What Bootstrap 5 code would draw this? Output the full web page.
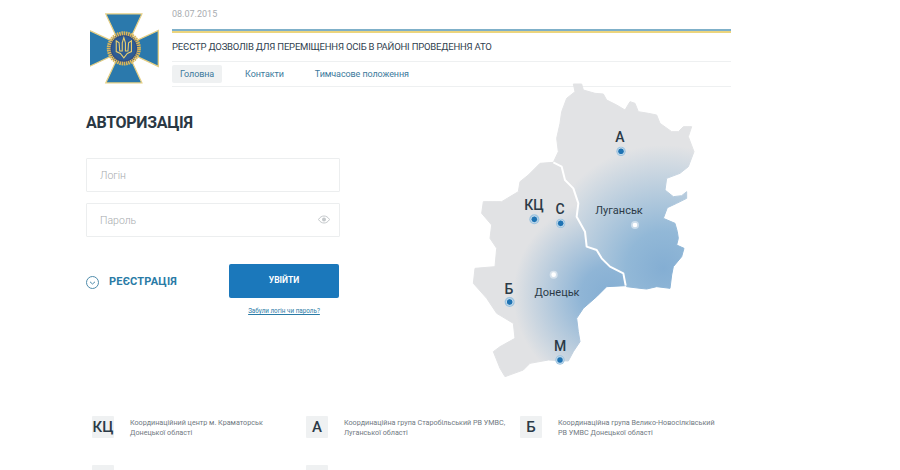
<!DOCTYPE html>
<html lang="uk">
<head>
  <meta charset="UTF-8">
  <meta name="viewport" content="width=device-width, initial-scale=1.0">
  <title>Реєстр дозволів</title>
  <link rel="stylesheet" href="https://cdn.jsdelivr.net/npm/bootstrap@5.3.0/dist/css/bootstrap.min.css">
  <style>
    html, body { height: 470px; overflow: hidden; }
    body { font-family: Roboto, "Liberation Sans", sans-serif; background: #fff; color: #2b3a47; }
    .page-wrap { width: 645px; margin-left: 86px; }
    .logo-box { width: 86px; flex: none; padding: 13px 0 0 4px; }
    .head-col { flex: 1; }
    .head-date { font-size: 9px; line-height: 12px; padding-top: 8px; height: 29px; color: #a9adb1; }
    .head-stripe { height: 4px; background: linear-gradient(#7fb0c9 0, #7fb0c9 50%, #ecd57e 50%, #ecd57e 100%); }
    .head-title { font-size: 9.500px; line-height: 28px; height: 29px; color: #30414f; border-bottom: 1px solid #eef0f1; letter-spacing: -.2px; white-space: nowrap; }
    .head-nav { height: 25px; padding-top: 3px; border-bottom: 1px solid #eef0f1; }
    .head-nav a { font-size: 9px; line-height: 18px; height: 18px; padding: 0 8px; color: #3d7a9c; text-decoration: none; letter-spacing: -.1px; border-radius: 2px; margin-right: 15px; }
    .head-nav a.active { background: #eff1f2; }
    .left-col { width: 254px; flex: none; }
    .auth-title { font-size: 16px; font-weight: 700; line-height: 20px; margin: 26px 0 25px; letter-spacing: -.3px; color: #2a3844; }
    .auth-input { height: 34px; border: 1px solid #eceeef; border-radius: 1px; padding: 0 13px; font-size: 10.500px; font-weight: 300; color: #555; margin-bottom: 11px; box-shadow: none; }
    .auth-input::placeholder { color: #a6aaad; }
    .pass-wrap { position: relative; }
    .pass-eye { position: absolute; right: 10px; top: 12px; }
    .reg-link { height: 34px; padding-top: 2px; font-size: 11px; font-weight: 700; color: #2a7ba6; text-decoration: none; letter-spacing: .2px; gap: 10px; }
    .btn-enter { width: 110px; height: 34px; background: #1b78bb; border: 0; border-radius: 2px; color: #fff; font-size: 8.500px; font-weight: 700; padding: 0 0 2px; }
    .btn-enter:hover { background: #1b78bb; color: #fff; }
    .forgot-link { display: block; width: 110px; margin-top: 8px; text-align: center; font-size: 6.300px; line-height: 10px; color: #2a7ba6; white-space: nowrap; }
    .login-row { margin-top: 27px; }
    .submit-col { margin-right: 1px; }
    .map-box { margin: -12px 0 0 120px; position: relative; width: 250px; height: 310px; flex: none; }
    .map-code { font-size: 14px; font-weight: 500; fill: #2b3a47; text-anchor: middle; }
    .map-city { font-size: 11px; fill: #2b3a47; text-anchor: middle; }
    .legend-grid { display: grid; grid-template-columns: repeat(3, 214px); row-gap: 27px; margin: 31px 0 0 6px; }
    .legend-code { width: 22px; height: 22px; flex: none; background: #eff1f2; font-size: 15px; font-weight: 500; line-height: 22px; text-align: center; color: #2b3a47; border-radius: 1px; }
    .legend-text { font-size: 7.200px; line-height: 10px; margin: 2px 0 0 16px; color: #70797f; white-space: nowrap; }
  </style>
</head>
<body>
<div class="page-wrap">

  <header class="d-flex">
    <div class="logo-box">
      <svg width="74" height="74" viewBox="0 0 234 234">
        <defs>
          <g id="armShape">
            <path d="M50 3 H164 L130 76 H84 Z" fill="#2b79ac" stroke="#e6cf84" stroke-width="4"/>
          </g>
        </defs>
        <use href="#armShape"/>
        <use href="#armShape" transform="rotate(90 107 112)"/>
        <use href="#armShape" transform="rotate(180 107 112)"/>
        <use href="#armShape" transform="rotate(270 107 112)"/>
        <circle cx="107" cy="112" r="48" fill="#2f4f86" stroke="#d9b65a" stroke-width="12" stroke-dasharray="5 2"/>
        <circle cx="107" cy="112" r="38" fill="#2e5c93"/>
        <path d="M107 78 L112 94 V120 L120 120 L122 94 L131 88 V122 L118 128 L107 142 L96 128 L83 122 V88 L92 94 L94 120 L102 120 V94 Z" fill="none" stroke="#e9cf6f" stroke-width="3.500"/>
      </svg>
    </div>
    <div class="head-col">
      <div class="head-date">08.07.2015</div>
      <div class="head-stripe"></div>
      <div class="head-title">РЕЄСТР ДОЗВОЛІВ ДЛЯ ПЕРЕМІЩЕННЯ ОСІБ В РАЙОНІ ПРОВЕДЕННЯ АТО</div>
      <nav class="head-nav d-flex">
        <a class="active" href="#">Головна</a>
        <a href="#">Контакти</a>
        <a href="#">Тимчасове положення</a>
      </nav>
    </div>
  </header>

  <div class="d-flex">
    <div class="left-col">
      <h1 class="auth-title">АВТОРИЗАЦІЯ</h1>
      <form>
        <input class="form-control auth-input" type="text" placeholder="Логін">
        <div class="pass-wrap">
          <input class="form-control auth-input" type="password" placeholder="Пароль">
          <svg class="pass-eye" width="12" height="9" viewBox="0 0 12 9">
            <path d="M.5 4.500C2 2 4 1 6 1s4 1 5.500 3.500C10 7 8 8 6 8S2 7 .5 4.500Z" fill="none" stroke="#c4c8cb"/>
            <circle cx="6" cy="4.500" r="2" fill="#c4c8cb"/>
          </svg>
        </div>
        <div class="d-flex justify-content-between align-items-start login-row">
          <a class="reg-link d-flex align-items-center" href="#">
            <svg width="13" height="13" viewBox="0 0 13 13">
              <circle cx="6.500" cy="6.500" r="6" fill="none" stroke="#4f8cab"/>
              <path d="M4 5.800 6.500 8 9 5.800" fill="none" stroke="#4f8cab"/>
            </svg>
            РЕЄСТРАЦІЯ
          </a>
          <div class="submit-col">
            <button class="btn btn-enter" type="button">УВІЙТИ</button>
            <a class="forgot-link" href="#">Забули логін чи пароль?</a>
          </div>
        </div>
      </form>
    </div>

    <div class="map-box">
      <svg width="250" height="310" viewBox="0 0 750 930">
        <defs>
          <radialGradient id="lugGrad" gradientUnits="userSpaceOnUse" cx="610" cy="580" r="370">
            <stop offset="0" stop-color="#84aed3"/>
            <stop offset=".3" stop-color="#92b8d7"/>
            <stop offset="1" stop-color="#e2e3e5"/>
          </radialGradient>
          <radialGradient id="donGrad" gradientUnits="userSpaceOnUse" cx="450" cy="660" r="290">
            <stop offset="0" stop-color="#84aed3"/>
            <stop offset=".3" stop-color="#8fb5d6"/>
            <stop offset="1" stop-color="#e1e2e4"/>
          </radialGradient>
        </defs>
        <path fill="url(#lugGrad)" stroke="url(#lugGrad)" stroke-width="3" stroke-linejoin="round" d="M340 27 365 27 370 45 405 55 430 57 440 75 470 90 495 105 510 80 525 85 535 110 565 115 590 120 600 145 635 170 655 170 670 155 695 155 685 185 702 230 685 275 660 295 620 310 615 345 640 365 665 362 680 350 680 370 650 385 622 398 610 430 645 445 652 470 655 490 650 510 672 520 665 545 640 575 635 600 630 640 590 635 560 642 540 640 500 635 490 595 450 575 425 550 410 525 380 515 375 470 350 425 355 385 340 340 315 315 305 275 280 262 295 230 290 190 300 145 305 110 320 70 345 50Z"/>
        <path fill="url(#donGrad)" stroke="url(#donGrad)" stroke-width="3" stroke-linejoin="round" d="M497 632 440 635 410 665 370 700 350 730 355 770 360 800 340 830 325 858 265 855 210 865 190 885 135 905 120 880 100 830 120 815 165 790 160 745 110 715 80 670 40 625 45 580 105 575 110 520 90 490 95 450 65 415 70 380 125 380 175 350 180 320 205 300 240 265 280 262 305 275 315 315 340 340 355 385 350 425 375 470 380 515 410 525 425 550 450 575 490 595Z"/>
        <path fill="none" stroke="#fff" stroke-width="6" stroke-linejoin="round" d="M280 262 305 275 315 315 340 340 355 385 350 425 375 470 380 515 410 525 425 550 450 575 490 595 497 632"/>
        <g fill="#1f73b3" stroke="#fff" stroke-width="2">
          <circle cx="483" cy="229" r="14" fill="#9cc3df" stroke="none"/>
          <circle cx="483" cy="229" r="10"/>
          <circle cx="223" cy="433" r="15" fill="#9cc3df" stroke="none"/>
          <circle cx="223" cy="433" r="10"/>
          <circle cx="302" cy="445" r="14" fill="#9cc3df" stroke="none"/>
          <circle cx="302" cy="445" r="10"/>
          <circle cx="149" cy="681" r="15" fill="#9cc3df" stroke="none"/>
          <circle cx="149" cy="681" r="10"/>
          <circle cx="300" cy="855" r="14" fill="#9cc3df" stroke="none"/>
          <circle cx="300" cy="855" r="10"/>
        </g>
        <circle cx="525" cy="450" r="12" fill="#fff" fill-opacity=".45"/>
        <circle cx="525" cy="450" r="7" fill="#fff"/>
        <circle cx="281" cy="599" r="12" fill="#fff" fill-opacity=".45"/>
        <circle cx="281" cy="599" r="7" fill="#fff"/>
        <g transform="scale(3)">
          <text class="map-code" x="160" y="67">А</text>
          <text class="map-code" x="74" y="135">КЦ</text>
          <text class="map-code" x="100" y="139">С</text>
          <text class="map-code" x="49" y="219">Б</text>
          <text class="map-code" x="100" y="276">М</text>
          <text class="map-city" x="159" y="139">Луганськ</text>
          <text class="map-city" x="97" y="221">Донецьк</text>
        </g>
      </svg>
    </div>
  </div>

  <div class="legend-grid">
    <div class="d-flex">
      <div class="legend-code">КЦ</div>
      <div class="legend-text">Координаційний центр м. Краматорськ<br>Донецької області</div>
    </div>
    <div class="d-flex">
      <div class="legend-code">А</div>
      <div class="legend-text">Координаційна група Старобільський РВ УМВС,<br>Луганської області</div>
    </div>
    <div class="d-flex">
      <div class="legend-code">Б</div>
      <div class="legend-text">Координаційна група Велико-Новосілківський<br>РВ УМВС Донецької області</div>
    </div>
    <div class="d-flex"><div class="legend-code"></div></div>
    <div class="d-flex"><div class="legend-code"></div></div>
  </div>

</div>
<script src="https://cdn.jsdelivr.net/npm/bootstrap@5.3.0/dist/js/bootstrap.bundle.min.js"></script>
</body>
</html>
